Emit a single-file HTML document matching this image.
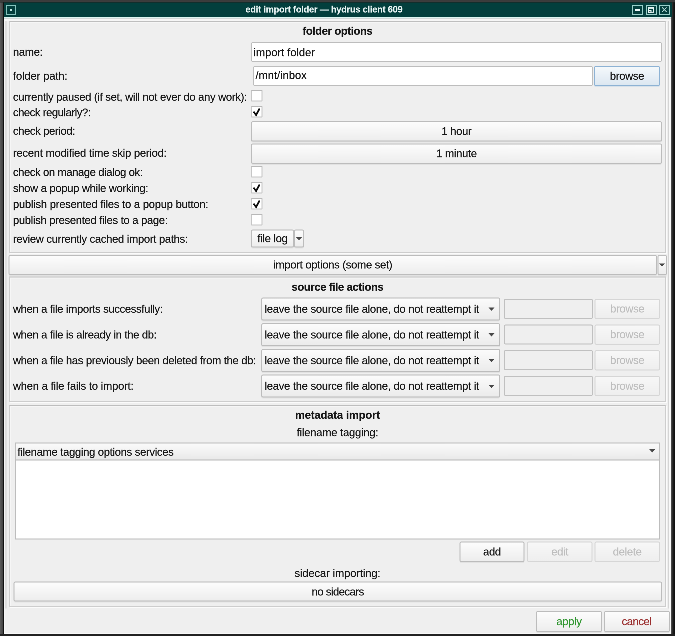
<!DOCTYPE html>
<html>
<head>
<meta charset="utf-8">
<title>edit import folder — hydrus client 609</title>
<style>
*{box-sizing:border-box;margin:0;padding:0}
html,body{width:675px;height:636px;overflow:hidden;background:#2c2c2c}
#root{position:absolute;left:0;top:0;width:2700px;height:2544px;transform:scale(0.25);transform-origin:0 0;will-change:transform,opacity;font-family:"Liberation Sans",sans-serif;font-size:44px;letter-spacing:-0.8px;color:#161616;-webkit-text-stroke:0.48px currentColor;overflow:hidden}
#root div,#root svg{position:absolute}
#frame{left:0;top:0;width:2700px;height:2544px;background:linear-gradient(90deg,#5c5c5c 0,#424242 12px,#111 12px,#111 16px,#3a3a3a 16px,#3a3a3a 2680px,#555 2684px,#2a2a2a 2690px,#121212 2696px)}
#frametop{left:0;top:0;width:2700px;height:10px;background:linear-gradient(#3a3a3a 0,#3e3e3e 6.4px,#1a2424 9.2px)}
#framebot{left:0;top:2535.2px;width:2700px;height:12px;background:#222}
#win{left:16px;top:12px;width:2668px;height:2523.2px;background:#efefef;border-left:4px solid #f6f6f6;border-right:8px solid #f8f8f8;border-bottom:4px solid #f8f8f8}
#winl{left:20px;top:72px;width:8px;height:2362px;background:linear-gradient(90deg,#dadada,#e2e2e2)}
#winr{left:2672px;top:72px;width:4px;height:2362px;background:#d4d4d4}
#wint{left:16px;top:72px;width:2668px;height:12px;background:linear-gradient(#d2d8d8 0,#d2d8d8 4px,#f6f6f6 4px)}
#title{left:16px;top:8.8px;width:2672px;height:58.4px;background:#033f3d;border-top:3.2px solid #122e2c}
#titleline{left:16px;top:67.2px;width:2668px;height:5.2px;background:#dcf5f1}
#title .t{left:-56px;width:100%;top:-4px;height:60px;line-height:60px;text-align:center;color:#e8f4f4;font-weight:700;font-size:36px;letter-spacing:-0.48px}
.tb{top:8px;height:40px;border:3.6px solid #9bd0ca}
.grp{border:4px solid #cdcdcd;border-top-color:#bebebe;box-shadow:4px 4px 0 #fbfbfb, inset 4px 4px 0 #f6f6f6}
.lbl{white-space:nowrap;height:56px;line-height:56px}
.b{font-weight:700;letter-spacing:-1px}
.c{text-align:center}
.inp{background:#fff;border:4px solid #bdbdbd;border-radius:8px;white-space:nowrap;padding-left:6px}
.inp.dis{background:#efefef;border-color:#c0c0c0}
.btn{border:4px solid #bcbcbc;border-radius:7.2px;background:linear-gradient(#fcfcfc,#ededed);text-align:center;white-space:nowrap;box-shadow:0 4px 0 #e2e2e2}
.btn.dis{color:#bebebe;border-color:#d6d6d6;background:linear-gradient(#f7f7f7,#eeeeee);box-shadow:none}
.btn.foc{border-color:#8db2d4;background:linear-gradient(#f4f8fb,#dce7f1);box-shadow:0 4px 0 #d8e2ea}
.cb{width:45.6px;height:46px;background:#fff;border:4px solid #c6c6c6;border-top-color:#b8b8b8;border-radius:4px}
.cb svg{left:0;top:0}
.combo{border:4px solid #bcbcbc;border-radius:7.2px;background:linear-gradient(#fbfbfb,#ebebeb);white-space:nowrap;padding-left:9.2px;letter-spacing:-0.68px;box-shadow:0 4px 0 #e2e2e2}
.arr{width:0;height:0;border-style:solid;border-color:transparent;border-bottom-width:0}
.list{background:#fff;border:4px solid #bdbdbd}
.hdr{background:linear-gradient(#fafafa,#e9e9e9);border-bottom:4px solid #b8b8b8}
</style>
</head>
<body>
<div id="root">
<div id="frame"></div><div id="win"></div><div id="winl"></div><div id="winr"></div><div id="wint"></div><div id="frametop"></div><div id="framebot"></div>
<div id="title"><div class="t">edit import folder — hydrus client 609</div>
<div class="tb" style="left:8px;width:40px;border-color:#86c4be"><div style="left:12.4px;top:12.4px;width:8px;height:8px;background:#bfe6e2"></div></div>
<div class="tb" style="left:2512px;width:44px"><div style="left:8px;top:12px;width:20px;height:8px;background:#eefafa"></div></div>
<div class="tb" style="left:2568px;width:44px"></div><svg style="left:2568px;top:8px" width="44px" height="40px" viewBox="0 0 11 10"><rect x="2.4" y="2.8" width="5.2" height="4.4" fill="none" stroke="#e6f6f4" stroke-width="1"/><rect x="1.9" y="2.3" width="6.2" height="1.4" fill="#e6f6f4"/><rect x="2.4" y="5.3" width="2.6" height="1.9" fill="none" stroke="#e6f6f4" stroke-width="1"/></svg>
<div class="tb" style="left:2620px;width:44px"><svg style="left:0;top:0" width="36px" height="32px" viewBox="0 0 9 8"><path d="M2.4 1.7 L6.8 6.1 M6.8 1.7 L2.4 6.1" stroke="#b4dcd7" stroke-width="0.9"/></svg></div>
</div><div id="titleline"></div>
<div class="grp" style="left:36px;top:83.6px;width:2628px;height:928px;"></div>
<div class="lbl b c" style="left:36px;top:96px;width:2628px;">folder options</div>
<div class="lbl " style="left:52px;top:180px;">name:</div>
<div class="inp " style="left:1004px;top:168px;width:1644px;height:80px;line-height:75.2px;letter-spacing:0.08px">import folder</div>
<div class="lbl " style="left:52px;top:276px;letter-spacing:-0.2px;">folder path:</div>
<div class="inp " style="left:1012px;top:264px;width:1360px;height:80px;line-height:66.4px;letter-spacing:0.2px">/mnt/inbox</div>
<div class="btn foc" style="left:2376px;top:264px;width:264px;height:80px;line-height:72px;">browse</div>
<div class="lbl " style="left:52px;top:360px;">currently paused (if set, will not ever do any work):</div>
<div class="cb" style="left:1004px;top:360px"></div>
<div class="lbl " style="left:52px;top:422px;letter-spacing:-1.32px;">check regularly?:</div>
<div class="cb" style="left:1004px;top:424px"><svg width="40px" height="40px" viewBox="0 0 10 10"><path d="M1.5 4.6 L4.1 8 L7.6 1.5" fill="none" stroke="#0c0c0c" stroke-width="1.75"/></svg></div>
<div class="lbl " style="left:52px;top:496px;letter-spacing:-1.04px;">check period:</div>
<div class="btn " style="left:1004px;top:485.2px;width:1644px;height:80.8px;line-height:72.8px;">1 hour</div>
<div class="lbl " style="left:52px;top:584px;letter-spacing:-0.58px;">recent modified time skip period:</div>
<div class="btn " style="left:1004px;top:574px;width:1644px;height:80.8px;line-height:72.8px;">1 minute</div>
<div class="lbl " style="left:52px;top:660.8px;letter-spacing:-1.14px;">check on manage dialog ok:</div>
<div class="cb" style="left:1004px;top:664px"></div>
<div class="lbl " style="left:52px;top:724.8px;">show a popup while working:</div>
<div class="cb" style="left:1004px;top:728px"><svg width="40px" height="40px" viewBox="0 0 10 10"><path d="M1.5 4.6 L4.1 8 L7.6 1.5" fill="none" stroke="#0c0c0c" stroke-width="1.75"/></svg></div>
<div class="lbl " style="left:52px;top:788.8px;letter-spacing:-0.56px;">publish presented files to a popup button:</div>
<div class="cb" style="left:1004px;top:792px"><svg width="40px" height="40px" viewBox="0 0 10 10"><path d="M1.5 4.6 L4.1 8 L7.6 1.5" fill="none" stroke="#0c0c0c" stroke-width="1.75"/></svg></div>
<div class="lbl " style="left:52px;top:852.8px;">publish presented files to a page:</div>
<div class="cb" style="left:1004px;top:856px"></div>
<div class="lbl " style="left:52px;top:928px;">review currently cached import paths:</div>
<div class="btn " style="left:1004px;top:918px;width:172px;height:72px;line-height:64px;">file log</div>
<div class="btn " style="left:1176px;top:918px;width:40px;height:72px;line-height:64px;"><div class="arr" style="left:3.6px;top:27.2px;border-left-width:12.4px;border-right-width:12.4px;border-top-width:12.8px;border-top-color:#484848"></div></div>
<div class="btn " style="left:34px;top:1020.4px;width:2594px;height:80px;line-height:70.4px;">import options (some set)</div>
<div class="btn " style="left:2630px;top:1020.4px;width:38px;height:80px;line-height:72px;"><div class="arr" style="left:2.4px;top:29.2px;border-left-width:12.4px;border-right-width:12.4px;border-top-width:12.8px;border-top-color:#484848"></div></div>
<div class="grp" style="left:36px;top:1105.6px;width:2628px;height:502px;"></div>
<div class="lbl b c" style="left:36px;top:1120px;width:2628px;">source file actions</div>
<div class="lbl " style="left:52px;top:1208px;letter-spacing:-0.908px;">when a file imports successfully:</div>
<div class="combo" style="left:1045.2px;top:1190px;width:956px;height:92px;line-height:84px">leave the source file alone, do not reattempt it<div class="arr" style="left:904.4px;top:36.4px;border-left-width:12.8px;border-right-width:12.8px;border-top-width:13.6px;border-top-color:#484848"></div></div>
<div class="inp dis" style="left:2014.8px;top:1194.8px;width:356.8px;height:80.8px;line-height:72.8px;"></div>
<div class="btn dis" style="left:2378px;top:1195.2px;width:262px;height:80.8px;line-height:72.8px;">browse</div>
<div class="lbl " style="left:52px;top:1310.8px;letter-spacing:-0.908px;">when a file is already in the db:</div>
<div class="combo" style="left:1045.2px;top:1292.8px;width:956px;height:92px;line-height:84px">leave the source file alone, do not reattempt it<div class="arr" style="left:904.4px;top:36.4px;border-left-width:12.8px;border-right-width:12.8px;border-top-width:13.6px;border-top-color:#484848"></div></div>
<div class="inp dis" style="left:2014.8px;top:1297.6px;width:356.8px;height:80.8px;line-height:72.8px;"></div>
<div class="btn dis" style="left:2378px;top:1298px;width:262px;height:80.8px;line-height:72.8px;">browse</div>
<div class="lbl " style="left:52px;top:1413.6px;letter-spacing:-0.88px;">when a file has previously been deleted from the db:</div>
<div class="combo" style="left:1045.2px;top:1395.6px;width:956px;height:92px;line-height:84px">leave the source file alone, do not reattempt it<div class="arr" style="left:904.4px;top:36.4px;border-left-width:12.8px;border-right-width:12.8px;border-top-width:13.6px;border-top-color:#484848"></div></div>
<div class="inp dis" style="left:2014.8px;top:1400.4px;width:356.8px;height:80.8px;line-height:72.8px;"></div>
<div class="btn dis" style="left:2378px;top:1400.8px;width:262px;height:80.8px;line-height:72.8px;">browse</div>
<div class="lbl " style="left:52px;top:1516.4px;letter-spacing:-0.52px;">when a file fails to import:</div>
<div class="combo" style="left:1045.2px;top:1498.4px;width:956px;height:92px;line-height:84px">leave the source file alone, do not reattempt it<div class="arr" style="left:904.4px;top:36.4px;border-left-width:12.8px;border-right-width:12.8px;border-top-width:13.6px;border-top-color:#484848"></div></div>
<div class="inp dis" style="left:2014.8px;top:1503.2px;width:356.8px;height:80.8px;line-height:72.8px;"></div>
<div class="btn dis" style="left:2378px;top:1503.6px;width:262px;height:80.8px;line-height:72.8px;">browse</div>
<div class="grp" style="left:36px;top:1619.6px;width:2628px;height:808.4px;"></div>
<div class="lbl b c" style="left:36px;top:1632px;width:2628px;letter-spacing:-0.2px">metadata import</div>
<div class="lbl c" style="left:36px;top:1702px;width:2628px;letter-spacing:-0.52px">filename tagging:</div>
<div class="list" style="left:60px;top:1770px;width:2580px;height:388px;"></div>
<div class="hdr" style="left:64px;top:1774px;width:2572px;height:68px;"></div>
<div class="lbl " style="left:70px;top:1780px;">filename tagging options services</div>
<div class="arr" style="left:2597.2px;top:1797.2px;border-left-width:12.4px;border-right-width:12.4px;border-top-width:13.6px;border-top-color:#484848"></div>
<div class="btn " style="left:1838px;top:2166px;width:260px;height:82px;line-height:74px;">add</div>
<div class="btn dis" style="left:2108px;top:2166px;width:262px;height:82px;line-height:74px;">edit</div>
<div class="btn dis" style="left:2378px;top:2166px;width:262px;height:82px;line-height:74px;">delete</div>
<div class="lbl c" style="left:36px;top:2265.2px;width:2628px;letter-spacing:-0.2px">sidecar importing:</div>
<div class="btn " style="left:54px;top:2326px;width:2594px;height:80px;line-height:73.6px;letter-spacing:-1.52px">no sidecars</div>
<div class="btn " style="left:2144px;top:2444px;width:264px;height:84px;line-height:76.8px;color:#2f962f">apply</div>
<div class="btn " style="left:2416px;top:2444px;width:264px;height:84px;line-height:76.8px;color:#9a2e2e;letter-spacing:-1.4px;padding-right:3.2px">cancel</div>
</div>
</body>
</html>
